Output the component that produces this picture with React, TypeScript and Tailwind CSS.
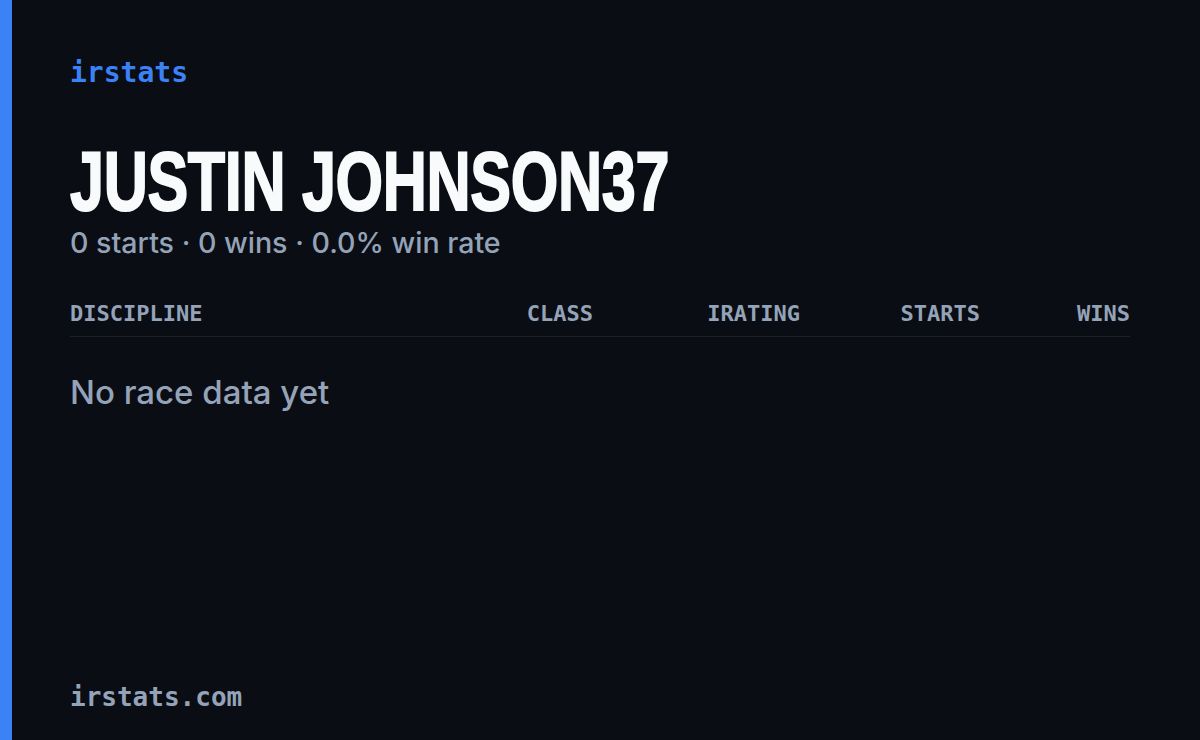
import React from "react";

const mono = { fontFamily: '"DejaVu Sans Mono", "Liberation Mono", monospace' };

export default function App() {
  const cols = ["DISCIPLINE", "CLASS", "IRATING", "STARTS", "WINS"];
  return (
    <div className="w-[1200px] h-[740px] bg-[#0a0d14] flex overflow-hidden">
      <div className="w-[12px] h-full bg-[#3b82f6] shrink-0" />
      <div className="flex-1 flex flex-col pl-[58px] pr-[70px] pt-[57px] pb-[27px]">
        <div
          className="text-[28px] leading-[32px] text-[#3b82f6] font-bold"
          style={mono}
        >
          irstats
        </div>
        <div className="mt-[48px] h-[88px] leading-[88px] whitespace-nowrap">
          <span
            className="inline-block origin-left scale-x-[0.728] text-[84px] font-bold text-[#f8fafc] tracking-[-0.5px] [-webkit-text-stroke:2px_#f8fafc]"
            style={{ fontFamily: '"Liberation Sans", Arial, sans-serif' }}
          >
            JUSTIN JOHNSON37
          </span>
        </div>
        <div
          className="text-[28.6px] leading-[36px] text-[#94a3b8] font-medium"
          style={{ fontFamily: 'Inter, "Noto Sans", sans-serif' }}
        >
          0 starts · 0 wins · 0.0% win rate
        </div>
        <div
          className="mt-[40px] grid grid-cols-[390px_133px_207px_180px_150px] border-b border-[#1c2029] pb-[9px] text-[22px] leading-[26px] text-[#94a3b8] font-bold"
          style={mono}
        >
          {cols.map((c, i) => (
            <div key={c} className={i === 0 ? "text-left" : "text-right"}>
              {c}
            </div>
          ))}
        </div>
        <div
          className="mt-[35px] text-[33px] leading-[40px] text-[#94a3b8] font-medium"
          style={{ fontFamily: 'Inter, "Noto Sans", sans-serif' }}
        >
          No race data yet
        </div>
        <div className="flex-1" />
        <div
          className="text-[26px] leading-[32px] text-[#94a3b8] font-bold"
          style={mono}
        >
          irstats.com
        </div>
      </div>
    </div>
  );
}
